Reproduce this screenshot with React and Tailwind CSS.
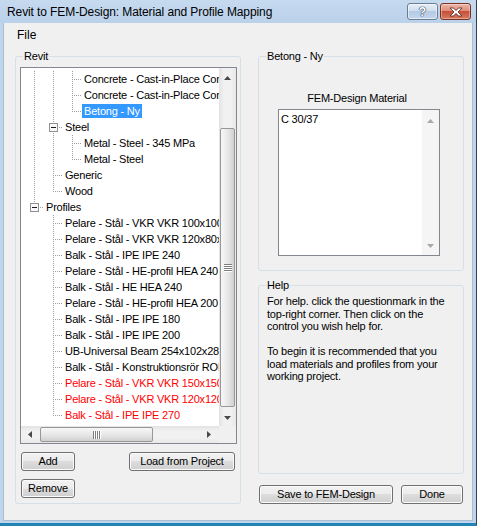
import React from "react";

const font = "font-['Liberation_Sans',Arial,sans-serif]";

function Arrow({ dir, color = "#4a4a4a" }) {
  const paths = {
    up: "M3.5 0L7 4H0Z",
    down: "M0 0H7L3.5 4Z",
    left: "M0 3.5L4 0V7Z",
    right: "M0 0L4 3.5L0 7Z",
  };
  const vertical = dir === "up" || dir === "down";
  return (
    <svg
      width={vertical ? 7 : 4}
      height={vertical ? 4 : 7}
      viewBox={vertical ? "0 0 7 4" : "0 0 4 7"}
      className="block"
    >
      <path d={paths[dir]} fill={color} />
    </svg>
  );
}

function Grip({ vertical }) {
  if (vertical) {
    return (
      <div className="flex flex-col gap-px">
        {[0, 1, 2, 3].map((i) => (
          <div key={i} className="h-px w-[8px] bg-[#7d7d7d] shadow-[0_1px_0_#ffffff]" />
        ))}
      </div>
    );
  }
  return (
    <div className="flex flex-row gap-px">
      {[0, 1, 2, 3].map((i) => (
        <div key={i} className="h-[8px] w-px bg-[#7d7d7d] shadow-[1px_0_0_#ffffff]" />
      ))}
    </div>
  );
}

function TreeCell({ type, box }) {
  const stroke = "#a0a0a0";
  return (
    <svg width="19" height="16" className="block shrink-0">
      {(type === "line" || type === "tee") && (
        <line x1="9.5" y1="0" x2="9.5" y2="16" stroke={stroke} strokeDasharray="1 1" />
      )}
      {type === "ell" && (
        <line x1="9.5" y1="0" x2="9.5" y2="9" stroke={stroke} strokeDasharray="1 1" />
      )}
      {(type === "tee" || type === "ell") && (
        <line x1="11" y1="8.5" x2="19" y2="8.5" stroke={stroke} strokeDasharray="1 1" />
      )}
      {box && (
        <g>
          <rect x="5.5" y="4.5" width="8" height="8" fill="#f7f7f7" stroke="#919191" />
          <line x1="7" y1="8.5" x2="12" y2="8.5" stroke="#1a1a1a" />
        </g>
      )}
    </svg>
  );
}

const profileItems = [
  { text: "Pelare - Stål - VKR VKR 100x100x5" },
  { text: "Pelare - Stål - VKR VKR 120x80x5" },
  { text: "Balk - Stål - IPE IPE 240" },
  { text: "Pelare - Stål - HE-profil HEA 240" },
  { text: "Balk - Stål - HE HEA 240" },
  { text: "Pelare - Stål - HE-profil HEA 200" },
  { text: "Balk - Stål - IPE IPE 180" },
  { text: "Balk - Stål - IPE IPE 200" },
  { text: "UB-Universal Beam 254x102x28" },
  { text: "Balk - Stål - Konstruktionsrör ROR 76.1x5" },
  { text: "Pelare - Stål - VKR VKR 150x150x8", red: true },
  { text: "Pelare - Stål - VKR VKR 120x120x6", red: true },
  { text: "Balk - Stål - IPE IPE 270", red: true },
];

const rows = [
  { cells: ["line", "line", "tee"], text: "Concrete - Cast-in-Place Concrete" },
  { cells: ["line", "line", "tee"], text: "Concrete - Cast-in-Place Concrete" },
  { cells: ["line", "line", "ell"], text: "Betong - Ny", sel: true },
  { cells: ["line", "tee"], box: true, text: "Steel" },
  { cells: ["line", "line", "tee"], text: "Metal - Steel - 345 MPa" },
  { cells: ["line", "line", "ell"], text: "Metal - Steel" },
  { cells: ["line", "tee"], text: "Generic" },
  { cells: ["line", "ell"], text: "Wood" },
  { cells: ["ell"], box: true, text: "Profiles" },
  ...profileItems.map((p, i) => ({
    cells: ["blank", i === profileItems.length - 1 ? "ell" : "tee"],
    text: p.text,
    red: p.red,
  })),
];

function Group({ label, className = "", children }) {
  return (
    <div className={`relative rounded-[3px] border border-[#d5dfe5] ${className}`}>
      <span className="absolute left-[7px] top-[-7px] bg-[#f0f0f0] px-px text-[11px] leading-[13px] tracking-[-0.2px] text-black">
        {label}
      </span>
      {children}
    </div>
  );
}

function Button({ children, className = "" }) {
  return (
    <button
      className={`${font} flex h-[19px] items-center justify-center rounded-[3px] border border-[#707070] bg-[linear-gradient(to_bottom,#f2f2f2,#ebebeb_50%,#dddddd_50%,#cfcfcf)] text-[11px] leading-none tracking-[-0.2px] text-black shadow-[inset_0_0_0_1px_#fbfbfb] ${className}`}
    >
      {children}
    </button>
  );
}

function TreeView() {
  return (
    <div className="flex h-[377px] w-[217px] flex-col border border-[#828790] bg-white">
      <div className="flex h-[358px]">
        <div className="flex-1 overflow-hidden pt-[3px]">
          {rows.map((r, i) => (
            <div key={i} className="flex h-[16px] items-center pl-[4px]">
              {r.cells.map((c, j) => (
                <TreeCell key={j} type={c} box={r.box && j === r.cells.length - 1} />
              ))}
              <span
                className={`h-[14px] whitespace-nowrap px-[2px] text-[11px] leading-[14px] tracking-[-0.2px] ${
                  r.sel ? "bg-[#3399ff] text-white" : r.red ? "text-[#ff0000]" : "text-black"
                }`}
              >
                {r.text}
              </span>
            </div>
          ))}
        </div>
        <div className="flex w-[17px] shrink-0 flex-col bg-[linear-gradient(to_right,#e3e3e3,#f1f1f1_30%,#f1f1f1_70%,#e8e8e8)]">
          <div className="flex h-[17px] items-center justify-center pt-[3px]">
            <Arrow dir="up" />
          </div>
          <div className="h-[43px]" />
          <div className="mx-px flex h-[279px] items-center justify-center rounded-[2px] border border-[#979797] bg-[linear-gradient(to_right,#f7f7f7,#e8e8e8_50%,#d0d0d0)]">
            <Grip vertical />
          </div>
          <div className="flex-1" />
          <div className="flex h-[17px] items-center justify-center">
            <Arrow dir="down" />
          </div>
        </div>
      </div>
      <div className="flex h-[17px]">
        <div className="flex flex-1 bg-[linear-gradient(to_bottom,#e3e3e3,#f1f1f1_30%,#f1f1f1_70%,#e8e8e8)]">
          <div className="flex w-[17px] items-center justify-center">
            <Arrow dir="left" />
          </div>
          <div className="w-[2px]" />
          <div className="my-px flex w-[113px] items-center justify-center rounded-[2px] border border-[#979797] bg-[linear-gradient(to_bottom,#f7f7f7,#e8e8e8_50%,#d0d0d0)]">
            <Grip />
          </div>
          <div className="flex-1" />
          <div className="flex w-[17px] items-center justify-center pr-[4px]">
            <Arrow dir="right" />
          </div>
        </div>
        <div className="w-[17px] bg-[#f0f0f0]" />
      </div>
    </div>
  );
}

export default function App() {
  return (
    <div
      className={`${font} flex h-[526px] w-[477px] flex-col overflow-hidden border-b-[3px] border-r border-b-[#2383b4] border-r-[#2f3f52] bg-[#bfd5ec] text-black`}
    >
      {/* Title bar */}
      <div className="flex h-[23px] shrink-0 items-center pl-[7px] pr-[5px] bg-[linear-gradient(to_bottom,#c6daef,#bad1ea)]">
        <span className="text-[12px] leading-none tracking-[-0.1px] text-black">
          Revit to FEM-Design: Material and Profile Mapping
        </span>
        <div className="ml-auto flex gap-[2px] self-start pt-[3px]">
          <div className="flex h-[17px] w-[31px] items-center justify-center rounded-[3px] border border-[#6b7d94] bg-[linear-gradient(to_bottom,#e6eef8,#d0def0_45%,#b4cae4_50%,#c2d6ee)] shadow-[inset_0_0_0_1px_rgba(255,255,255,0.55)]">
            <span className="text-[12px] font-bold leading-none text-white [text-shadow:0_0_1px_#2a3a50,0_0_1px_#2a3a50,0_0_1px_#2a3a50]">
              ?
            </span>
          </div>
          <div className="flex h-[17px] w-[31px] items-center justify-center rounded-[3px] border border-[#7a3225] bg-[linear-gradient(to_bottom,#ecb7a9,#de8d78_45%,#c8503a_50%,#d67a5e)] shadow-[inset_0_0_0_1px_rgba(255,255,255,0.35)]">
            <svg width="14" height="10" viewBox="0 0 14 10" className="block">
              <path
                d="M1 1H4.2L7 3.4L9.8 1H13L9 5L13 9H9.8L7 6.6L4.2 9H1L5 5Z"
                fill="#ffffff"
                stroke="#4b2620"
                strokeWidth="0.8"
                strokeLinejoin="round"
              />
            </svg>
          </div>
        </div>
      </div>

      {/* Client area */}
      <div className="ml-[3px] flex h-[498px] w-[470px] shrink-0 flex-col border-x border-b border-[#a9bdd4] bg-[#f0f0f0]">
        {/* Menu */}
        <div className="flex h-[24px] items-center pl-[13px]">
          <span className="text-[12px] leading-none">File</span>
        </div>

        {/* Body */}
        <div className="flex gap-[17px] pl-[11px] pt-[9px]">
          {/* Left */}
          <Group label="Revit" className="flex h-[448px] w-[226px] flex-col pl-[4px] pr-[3px] pt-[10px]">
            <TreeView />
            <div className="mt-[8px] flex pl-px pr-[2px]">
              <Button className="w-[54px]">Add</Button>
              <Button className="ml-auto w-[106px]">Load from Project</Button>
            </div>
            <div className="mt-[8px] flex pl-px">
              <Button className="w-[54px]">Remove</Button>
            </div>
          </Group>

          {/* Right */}
          <div className="flex w-[206px] flex-col">
            <Group label="Betong - Ny" className="h-[215px] pt-[35px]">
              <div className="ml-[19px] w-[162px] pr-[4px] text-center text-[11px] leading-[13px] tracking-[-0.2px]">
                FEM-Design Material
              </div>
              <div className="ml-[19px] mt-[4px] flex h-[147px] w-[162px] border border-[#828790] bg-white">
                <div className="flex-1 pl-[2px] pt-[3px] text-[11px] leading-[13px] tracking-[-0.2px]">
                  C 30/37
                </div>
                <div className="flex w-[17px] flex-col bg-[#f5f5f5]">
                  <div className="flex h-[19px] items-center justify-center pt-[2px]">
                    <Arrow dir="up" color="#a8a8a8" />
                  </div>
                  <div className="flex-1" />
                  <div className="flex h-[17px] items-center justify-center pb-[2px]">
                    <Arrow dir="down" color="#a8a8a8" />
                  </div>
                </div>
              </div>
            </Group>

            <Group label="Help" className="mt-[14px] h-[189px] pl-[8px] pt-[9px]">
              <div className="text-[11px] leading-[12.5px] tracking-[-0.2px]">
                <div>For help. click the questionmark in the</div>
                <div>top-right corner. Then click on the</div>
                <div>control you wish help for.</div>
                <div className="h-[12.5px]" />
                <div>To begin it is recommended that you</div>
                <div>load materials and profiles from your</div>
                <div>working project.</div>
              </div>
            </Group>

            <div className="mt-[11px] flex pl-px pr-px">
              <Button className="w-[134px]">Save to FEM-Design</Button>
              <Button className="ml-auto w-[62px]">Done</Button>
            </div>
          </div>
        </div>
      </div>
    </div>
  );
}
